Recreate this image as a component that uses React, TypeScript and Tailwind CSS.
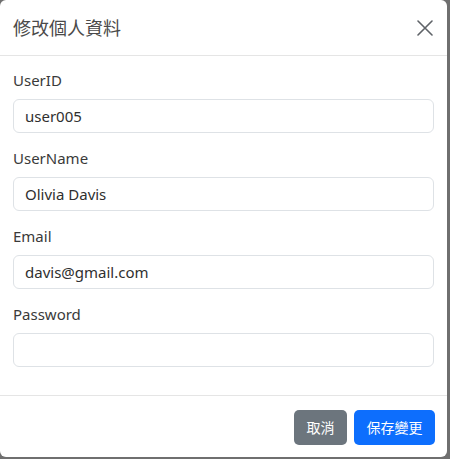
import React from "react";

const font = { fontFamily: '"Noto Sans", "Noto Sans CJK TC", sans-serif' };

function Field({ label, value }: { label: string; value: string }) {
  return (
    <div className="flex flex-col">
      <label className="text-[15px] leading-[24px] text-[#3a3a3a] mb-[7px]">{label}</label>
      <div className="h-[34px] rounded-[6px] border border-[#dee2e6] bg-white px-[11px] flex items-center text-[15px] text-[#2f2f2f]">
        {value}
      </div>
    </div>
  );
}

export default function App() {
  return (
    <div className="w-[450px] h-[459px] bg-[#6f6f6f]" style={font}>
      <div className="w-[447px] h-[457px] bg-white rounded-[6px] flex flex-col overflow-hidden">
        <div className="h-[56px] border-b border-[#e5e5e5] flex items-center justify-between pl-[13px] pr-[14px]">
          <div className="text-[18px] text-[#4a4a4a]" style={{ fontFamily: '"Noto Sans CJK TC", sans-serif' }}>修改個人資料</div>
          <svg width="16" height="16" viewBox="0 0 16 16" className="mt-[1px]">
            <path d="M1 1 L15 15 M15 1 L1 15" stroke="#5f6368" strokeWidth="1.6" strokeLinecap="round" />
          </svg>
        </div>
        <div className="flex flex-col gap-[13px] px-[13px] pt-[12px] pb-[28px] border-b border-[#e5e5e5]">
          <Field label="UserID" value="user005" />
          <Field label="UserName" value="Olivia Davis" />
          <Field label="Email" value="davis@gmail.com" />
          <Field label="Password" value="" />
        </div>
        <div className="flex justify-end gap-[7px] pr-[12px] pt-[14px]" style={{ fontFamily: '"Noto Sans CJK TC", sans-serif' }}>
          <button className="h-[35px] px-[12.5px] rounded-[5px] bg-[#6c757d] text-white text-[14px]">取消</button>
          <button className="h-[35px] px-[12.5px] rounded-[5px] bg-[#0d6efd] text-white text-[14px]">保存變更</button>
        </div>
      </div>
    </div>
  );
}
